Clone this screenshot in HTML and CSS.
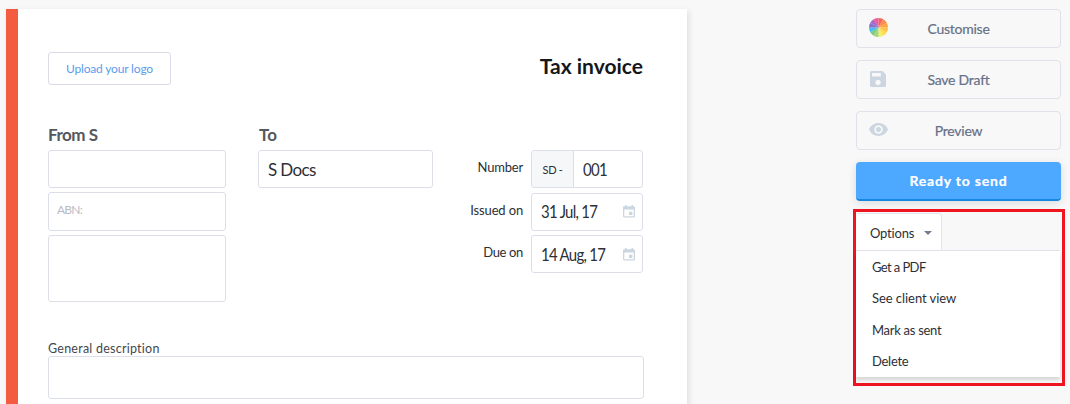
FILE: index.html
```html
<!DOCTYPE html>
<html lang="en">
<head>
<meta charset="utf-8">
<title>Tax invoice</title>
<link rel="stylesheet" href="styles.css">
</head>
<body>
<div class="page">
  <main class="sheet">
    <header class="sheet-head">
      <button class="upload"><span class="t-upload">Upload your logo</span></button>
      <h1 class="title"><span class="t-title">Tax invoice</span></h1>
    </header>
    <section class="parties">
      <div class="from">
        <h2 class="heading"><span class="t-from">From S</span></h2>
        <div class="field"></div>
        <div class="field placeholder"><span class="t-abn">ABN:</span></div>
        <div class="field address"></div>
      </div>
      <div class="to">
        <h2 class="heading"><span class="t-to">To</span></h2>
        <div class="field"><span class="t-docs">S Docs</span></div>
      </div>
      <div class="meta">
        <label class="meta-label"><span class="t-number">Number</span></label>
        <div class="field number"><span class="prefix"><span class="t-sd">SD -</span></span><span class="t-001">001</span></div>
        <label class="meta-label"><span class="t-issued">Issued on</span></label>
        <div class="field date"><span class="t-jul">31 Jul, 17</span>
          <svg class="calendar" viewBox="0 0 12 13"><path fill-rule="evenodd" d="M2 0h1.500v1.300h5V0H10v1.300h.8Q12 1.300 12 2.500v8.800q0 1.200-1.200 1.200H1.200Q0 12.500 0 11.300V2.500Q0 1.300 1.200 1.300H2zM1.300 4.500v6.700h9.400V4.500zM6 6.700h3.400v3.300H6z"/></svg></div>
        <label class="meta-label"><span class="t-due">Due on</span></label>
        <div class="field date"><span class="t-aug">14 Aug, 17</span>
          <svg class="calendar" viewBox="0 0 12 13"><path fill-rule="evenodd" d="M2 0h1.500v1.300h5V0H10v1.300h.8Q12 1.300 12 2.500v8.800q0 1.200-1.200 1.200H1.200Q0 12.500 0 11.300V2.500Q0 1.300 1.200 1.300H2zM1.300 4.500v6.700h9.400V4.500zM6 6.700h3.400v3.300H6z"/></svg></div>
      </div>
    </section>
    <section class="description">
      <label class="description-label"><span class="t-general">General description</span></label>
      <div class="field description-field"></div>
    </section>
  </main>
  <aside class="side">
    <button class="action">
      <svg class="wheel" viewBox="-10 -10 20 20">
        <path fill="#f2675c" d="M0 0V-10A10 10 0 0 1 5 -8.660z"/>
        <path fill="#fb8a4c" d="M0 0L5-8.660A10 10 0 0 1 8.660-5z"/>
        <path fill="#fda33f" d="M0 0L8.660-5A10 10 0 0 1 10 0z"/>
        <path fill="#fdbf45" d="M0 0H10A10 10 0 0 1 8.660 5z"/>
        <path fill="#fedb4b" d="M0 0L8.660 5A10 10 0 0 1 5 8.660z"/>
        <path fill="#f3ef6c" d="M0 0L5 8.660A10 10 0 0 1 0 10z"/>
        <path fill="#a9d673" d="M0 0V10A10 10 0 0 1-5 8.660z"/>
        <path fill="#7ccb85" d="M0 0L-5 8.660A10 10 0 0 1-8.660 5z"/>
        <path fill="#45bdf0" d="M0 0L-8.660 5A10 10 0 0 1-10 0z"/>
        <path fill="#8373cd" d="M0 0H-10A10 10 0 0 1-8.660-5z"/>
        <path fill="#a966c8" d="M0 0L-8.660-5A10 10 0 0 1-5-8.660z"/>
        <path fill="#ee5c93" d="M0 0L-5-8.660A10 10 0 0 1 0-10z"/>
      </svg>
      <span class="t-customise">Customise</span></button>
    <button class="action">
      <svg class="disk" viewBox="0 0 16 16"><path fill-rule="evenodd" d="M1.600 0H12.500L16 3.500V14.400Q16 16 14.400 16H1.600Q0 16 0 14.400V1.600Q0 0 1.600 0zM2 2V5.600H10.800V2zM8 8.800a2.700 2.700 0 1 0 .01 0z"/></svg>
      <span class="t-save">Save Draft</span></button>
    <button class="action">
      <svg class="eye" viewBox="1 4.500 22 15"><path d="M12 4.500C7 4.500 2.730 7.610 1 12c1.730 4.390 6 7.500 11 7.500s9.270-3.110 11-7.500c-1.730-4.390-6-7.500-11-7.500zM12 17c-2.760 0-5-2.240-5-5s2.240-5 5-5 5 2.240 5 5-2.240 5-5 5zm0-8c-1.660 0-3 1.340-3 3s1.340 3 3 3 3-1.340 3-3-1.340-3-3-3z"/></svg>
      <span class="t-preview">Preview</span></button>
    <button class="action primary"><span class="t-ready">Ready to send</span></button>
    <div class="highlight">
      <div class="tab"><span class="t-options">Options</span><span class="caret"></span></div>
      <ul class="menu">
        <li><span class="t-pdf">Get a PDF</span></li>
        <li><span class="t-client">See client view</span></li>
        <li><span class="t-mark">Mark as sent</span></li>
        <li><span class="t-delete">Delete</span></li>
      </ul>
    </div>
  </aside>
</div>
</body>
</html>
```
FILE: styles.css
```css
* { box-sizing: border-box; }
body { margin: 0; background: #f8f8f8; color: #2c2f36; font-family: Lato, "Open Sans", sans-serif; }
h1, h2, ul { margin: 0; padding: 0; }
button { font-family: inherit; padding: 0; }
span { white-space: nowrap; }
.page { display: flex; justify-content: space-between; height: 404px; padding: 9px 9px 0 6px; overflow: hidden; }
.sheet { width: 681px; height: 420px; padding: 43px 43px 0 30px; border-left: 12px solid #f35c41; background: #fff; box-shadow: 2px 2px 6px rgba(0, 0, 0, .1); }
.sheet-head { display: flex; justify-content: space-between; height: 33px; }
.upload { width: 123px; height: 33px; border: 1px solid #d9dce8; border-radius: 3px; background: #fff; color: #5a9cf0; font-size: 12px; }
.title { margin-right: 1px; color: #15171b; font-size: 21px; line-height: 28px; }
.parties { display: flex; height: 217px; margin-top: 38px; }
.from { display: flex; flex-direction: column; gap: 4px; width: 178px; }
.to { display: flex; flex-direction: column; gap: 4px; width: 175px; margin-left: 32px; }
.heading { height: 23px; color: #55585d; font-size: 17px; line-height: 23px; }
.field { display: flex; align-items: center; height: 38px; padding: 0 9px; border: 1px solid #dcdfe9; border-radius: 3px; background: #fff; font-size: 17px; }
.placeholder { height: 39px; padding: 0 8px 4px; color: #b9bcc4; font-size: 12px; }
.address { height: 67px; }
.meta { display: grid; grid-template-columns: 1fr 112px; grid-auto-rows: 38px; gap: 4.500px 8px; width: 210px; padding-top: 27px; }
.meta-label { padding-top: 9px; font-size: 13px; line-height: 16px; text-align: right; }
.number { padding-left: 0; gap: 9px; }
.prefix { display: flex; align-items: center; justify-content: center; width: 42px; height: 36px; border-right: 1px solid #dcdfe9; border-radius: 2px 0 0 2px; background: #f6f7f9; font-size: 11px; }
.date { justify-content: space-between; padding-right: 7px; }
.calendar { flex: none; width: 12px; height: 13px; fill: #ccd6e1; }
.description { display: flex; flex-direction: column; }
.description-label { display: block; height: 16px; font-size: 12.500px; line-height: 17px; color: #44474c; }
.description-field { width: 596px; height: 43px; }
.side { display: flex; flex-direction: column; gap: 12px; width: 205px; }
.action { display: grid; grid-template-columns: 42px 1fr 42px; align-items: center; height: 39px; border: 1px solid #dfe2ea; border-radius: 4px; background: #f8f8f8; color: #667087; font-size: 14px; -webkit-text-stroke: .2px; }
.action svg { justify-self: center; fill: #ccd6e1; }
.action span { grid-column: 2; justify-self: center; margin-top: -1px; }
.wheel { width: 19px; height: 19px; margin-top: -3px; }
.disk { width: 16px; height: 16px; margin-top: -1px; }
.eye { width: 19px; height: 13px; margin-top: -2px; }
.primary { border: 0; border-bottom: 2px solid #1488e0; background: #4da8ff; color: #fff; font-weight: bold; box-shadow: 0 2px 8px rgba(0, 0, 0, .12); }
.highlight { flex: none; width: 212px; height: 177px; margin: -4px 0 0 -3px; padding: 1px 0; border: 3px solid #ee1420; background: #f8f8f8; }
.tab { display: flex; align-items: center; justify-content: space-between; width: 86px; height: 38px; padding: 0 9px 0 14px; border: 1px solid #e2e5ed; border-left: 0; border-bottom: 0; border-radius: 3px 3px 0 0; background: #fff; font-size: 13px; }
.caret { border: 4px solid transparent; border-top-color: #747b8a; border-bottom: 0; }
.menu { width: 204px; height: 127px; margin-top: -1px; border-top: 1px solid #dfe2ea; background: #fff; box-shadow: 0 3px 4px rgba(0, 0, 0, .14); list-style: none; font-size: 13px; }
.menu li { display: flex; align-items: center; height: 31.500px; padding-left: 16px; }

/* Tracking per label */
.t-upload { letter-spacing: -.17px; }
.t-from { letter-spacing: -.5px; }
.t-to { margin-left: 1px; }
.t-docs { letter-spacing: -.65px; }
.t-abn { letter-spacing: -.8px; }
.t-sd { letter-spacing: -.3px; }
.t-number { letter-spacing: -.2px; }
.t-issued { letter-spacing: -.15px; }
.t-due { letter-spacing: -.35px; }
.t-001, .t-jul, .t-aug { display: inline-block; letter-spacing: -.8px; transform: scaleX(.88); transform-origin: left; }
.t-general { letter-spacing: .24px; }
.t-customise, .t-save, .t-preview { letter-spacing: -.24px; }
.t-ready { letter-spacing: .8px; }
.t-options { letter-spacing: -.2px; }
.t-pdf { letter-spacing: -.6px; }
.t-client { letter-spacing: -.05px; }
.t-mark, .t-delete { letter-spacing: -.28px; }
```
